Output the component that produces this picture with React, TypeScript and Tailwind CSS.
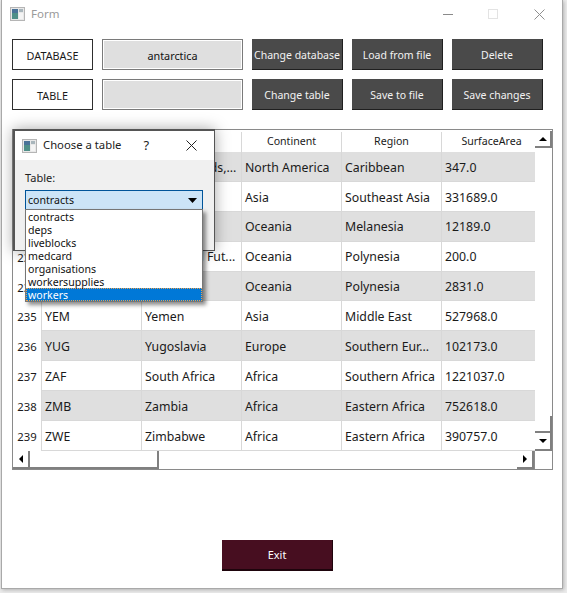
const sans = "font-['Noto_Sans','Open_Sans',sans-serif]";

function WinIcon() {
  return (
    <svg width="15" height="14" viewBox="0 0 15 14" className="shrink-0">
      <rect x="0.5" y="0.5" width="14" height="13" fill="#e8e8e8" stroke="#b5b5b5" />
      <rect x="2" y="2" width="6" height="10" fill="#4f8f88" />
      <rect x="2" y="2" width="6" height="4" fill="#4a7398" />
      <rect x="9" y="2" width="4" height="3" fill="#a9b6bc" />
      <rect x="9" y="6" width="4" height="6" fill="#f4f4f4" />
    </svg>
  );
}

function DarkBtn({ label }: { label: string }) {
  return (
    <div className="w-[91px] h-[31px] pt-[3px] bg-[#4a4a4a] border-r border-b border-[#1f1f1f] flex items-center justify-center text-[10.5px] text-[#f2f2f2] whitespace-nowrap">
      {label}
    </div>
  );
}

function Row1({ label, value, children }: { label: string; value: string; children: React.ReactNode }) {
  return (
    <div className="flex h-[31px]">
      <div className="w-[81px] pt-[3px] border border-[#2e2e2e] flex items-center justify-center text-[10.8px] text-[#1a1a1a]">{label}</div>
      <div className="ml-[9px] w-[141px] pt-[3px] bg-[#dfdfdf] border border-[#7a7a7a] outline-1 -outline-offset-2 outline-white flex items-center justify-center text-[10.8px] text-[#111]">{value}</div>
      <div className="ml-[9px] flex gap-[9px]">{children}</div>
    </div>
  );
}

const rows = [
  ["230", "VIR", "Virgin Islands,...", "North America", "Caribbean", "347.0"],
  ["231", "VNM", "Vietnam", "Asia", "Southeast Asia", "331689.0"],
  ["232", "VUT", "Vanuatu", "Oceania", "Melanesia", "12189.0"],
  ["233", "WLF", "Wallis and Fut...", "Oceania", "Polynesia", "200.0"],
  ["234", "WSM", "Samoa", "Oceania", "Polynesia", "2831.0"],
  ["235", "YEM", "Yemen", "Asia", "Middle East", "527968.0"],
  ["236", "YUG", "Yugoslavia", "Europe", "Southern Eur...", "102173.0"],
  ["237", "ZAF", "South Africa", "Africa", "Southern Africa", "1221037.0"],
  ["238", "ZMB", "Zambia", "Africa", "Eastern Africa", "752618.0"],
  ["239", "ZWE", "Zimbabwe", "Africa", "Eastern Africa", "390757.0"],
];

const widths = ["w-[100px]", "w-[100px]", "w-[100px]", "w-[100px]", "w-[93px]"];

function Arrow({ dir }: { dir: "up" | "down" | "left" | "right" }) {
  const pts = { up: "0,4 4,0 8,4", down: "0,0 8,0 4,4", left: "4,0 4,8 0,4", right: "0,0 4,4 0,8" }[dir];
  const horiz = dir === "left" || dir === "right";
  return (
    <svg width={horiz ? 4 : 8} height={horiz ? 8 : 4} viewBox={horiz ? "0 0 4 8" : "0 0 8 4"}>
      <polygon points={pts} fill="#000" />
    </svg>
  );
}

function Table() {
  return (
    <div className="mt-[19px] ml-[10px] w-[541px] h-[341px] border border-[#8a8a8a] flex flex-col bg-white">
      <div className="flex h-[321px]">
        <div className="w-[522px] flex flex-col">
          <div className="flex h-[22px] pt-[2px] text-[10.6px] text-[#1a1a1a]">
            <div className="w-[29px] border-r border-[#d8d8d8]" />
            {["", "", "Continent", "Region", "SurfaceArea"].map((h, i) => (
              <div key={i} className={`${widths[i]} flex items-center justify-center border-r border-[#d8d8d8] last:border-r-0 last:pl-[6px]`}>{h}</div>
            ))}
          </div>
          {rows.map((r, i) => (
            <div key={r[0]} className="flex h-[30px] text-[12.3px] text-[#1a1a1a]">
              <div className="w-[29px] pt-[3px] flex items-center justify-center text-[11.3px] border-r border-[#d8d8d8]">{r[0]}</div>
              {r.slice(1).map((c, j) => (
                <div key={j} className={`${widths[j]} pt-[3px] flex items-center pl-[3px] whitespace-nowrap overflow-hidden border-b border-r border-[#d8d8d8] last:border-r-0 ${i % 2 === 0 ? "bg-[#dfdfdf]" : "bg-white"}`}>{c}</div>
              ))}
            </div>
          ))}
        </div>
        <div className="w-[17px] flex flex-col pt-[1px]">
          <div className="h-[17px] border-r-2 border-b-2 border-[#808080] flex items-center justify-center"><Arrow dir="up" /></div>
          <div className="flex-1" />
          <div className="h-[17px] border-r-2 border-b-2 border-[#808080]" />
          <div className="h-[18px] border-r-2 border-b-2 border-[#808080] flex items-center justify-center"><Arrow dir="down" /></div>
        </div>
      </div>
      <div className="flex h-[18px]">
        <div className="w-[17px] border-r-2 border-b-2 border-[#808080] flex items-center justify-center"><Arrow dir="left" /></div>
        <div className="w-[129px] border-r-2 border-b-2 border-[#808080]" />
        <div className="flex-1" />
        <div className="w-[17px] border-r-2 border-b-2 border-[#808080] flex items-center justify-center"><Arrow dir="right" /></div>
        <div className="w-[18px] border-l border-[#8a8a8a]" />
      </div>
    </div>
  );
}

function Dialog() {
  const items = ["contracts", "deps", "liveblocks", "medcard", "organisations", "workersupplies"];
  return (
    <div className="absolute left-[13px] top-[129px] w-[202px] h-[122px] border-2 border-r-1 border-b-1 border-[#555] shadow-[0_0_14px_rgba(0,0,0,0.35)] bg-[#f0f0f0] flex flex-col">
      <div className="h-[29px] bg-white flex items-center pl-[7px] text-[11.3px] text-[#222]">
        <WinIcon />
        <span className="ml-[6px]">Choose a table</span>
        <span className="ml-[22px] text-[13px]">?</span>
        <svg width="11" height="11" viewBox="0 0 11 11" className="ml-[37px]">
          <path d="M0.5 0.5 10.5 10.5 M10.5 0.5 0.5 10.5" stroke="#222" strokeWidth="1" />
        </svg>
      </div>
      <div className="pl-[10px] pt-[10px] relative">
        <div className="text-[11px] text-[#222] leading-[16px]">Table:</div>
        <div className="mt-[4px] w-[178px] h-[20px] pt-[2px] bg-[#cce4f7] border border-[#005499] flex items-center pl-[2px] pr-[5px] justify-between text-[10.6px] text-[#111]">
          <span>contracts</span>
          <svg width="9" height="5" viewBox="0 0 9 5" className="-mt-[2px]"><polygon points="0,0 9,0 4.5,5" fill="#000" /></svg>
        </div>
        <div className="absolute left-[10px] top-[49px] w-[178px] h-[93px] bg-white border border-[#767676] shadow-[3px_3px_4px_rgba(0,0,0,0.45)] z-10 text-[10.6px] text-[#111] leading-[15px]">
          {items.map((it) => (
            <div key={it} className="h-[13px] pl-[2px]">{it}</div>
          ))}
          <div className="h-[13px] pl-[2px] bg-[#0078d7] text-white outline-1 -outline-offset-1 outline-dotted outline-[#e8a050]">workers</div>
        </div>
      </div>
    </div>
  );
}

export default function App() {
  return (
    <div className={`relative w-[567px] h-[593px] bg-[#ececec] overflow-hidden ${sans}`}>
      <div className="ml-[1px] w-[562px] h-[589px] bg-white border-x border-b border-[#a9a9a9] shadow-[1px_1px_4px_rgba(0,0,0,0.25)] flex flex-col">
        <div className="h-[28px] flex items-center pl-[8px] text-[11.5px] text-[#9a9a9a]">
          <WinIcon />
          <span className="ml-[6px]">Form</span>
          <div className="ml-[384px] w-[10px] h-[1px] bg-[#8a8a8a]" />
          <div className="ml-[35px] w-[10px] h-[10px] border border-[#e3e3e3]" />
          <svg width="11" height="11" viewBox="0 0 11 11" className="ml-[36px]">
            <path d="M0.5 0.5 10.5 10.5 M10.5 0.5 0.5 10.5" stroke="#8f8f8f" strokeWidth="1" />
          </svg>
        </div>
        <div className="pl-[10px] pt-[11px] flex flex-col gap-[9px]">
          <Row1 label="DATABASE" value="antarctica">
            <DarkBtn label="Change database" />
            <DarkBtn label="Load from file" />
            <DarkBtn label="Delete" />
          </Row1>
          <Row1 label="TABLE" value="">
            <DarkBtn label="Change table" />
            <DarkBtn label="Save to file" />
            <DarkBtn label="Save changes" />
          </Row1>
        </div>
        <Table />
        <div className="mt-[70px] ml-[220px] w-[111px] h-[31px] pt-[1px] bg-[#470e20] border-r border-b-2 border-[#1e040c] flex items-center justify-center text-[11px] text-white">Exit</div>
      </div>
      <Dialog />
    </div>
  );
}
